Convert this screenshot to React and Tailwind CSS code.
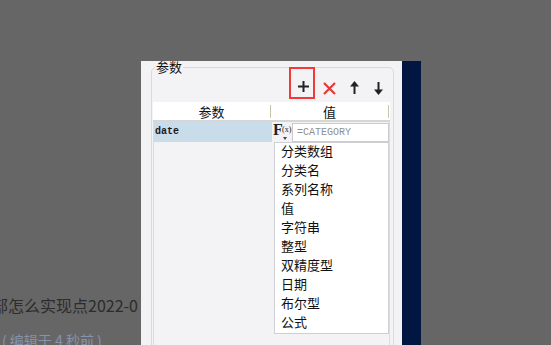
import React from "react";

const cjk = { fontFamily: '"Noto Sans CJK SC", "Noto Sans", sans-serif' };
const mono = { fontFamily: '"Liberation Mono", "DejaVu Sans Mono", monospace' };

const types = ["分类数组", "分类名", "系列名称", "值", "字符串", "整型", "双精度型", "日期", "布尔型", "公式"];

const PlusIcon = () => (
  <svg width="11" height="11" viewBox="0 0 11 11" className="block">
    <path d="M5.5 0v11M0 5.5h11" stroke="#222" strokeWidth="2" />
  </svg>
);

const CrossIcon = () => (
  <svg width="13" height="13" viewBox="0 0 13 13" className="block">
    <path d="M1 1l11 11M12 1L1 12" stroke="#e53935" strokeWidth="2.2" />
  </svg>
);

const ArrowIcon = ({ down }) => (
  <svg width="9" height="13" viewBox="0 0 9 13" className="block" style={down ? { transform: "rotate(180deg)" } : undefined}>
    <path d="M4.5 0L9 5.5H0z" fill="#222" />
    <rect x="3.5" y="4" width="2" height="9" fill="#222" />
  </svg>
);

const App = () => {
  return (
    <div className="relative w-[551px] h-[345px] overflow-hidden bg-[#666666]" style={cjk}>
      {/* page behind the dimmed overlay */}
      <div className="pt-[294px]">
        <div className="ml-[-8px] text-[16px] leading-[22px] text-[#2c2c2c] whitespace-nowrap">部怎么实现点2022-0</div>
        <div className="mt-[14px] ml-[2px] text-[14px] leading-[20px] text-[#8793a8] whitespace-nowrap">( 编辑于 4 秒前 )</div>
      </div>

      {/* dialog */}
      <div className="absolute left-[141px] top-[61px] flex h-[300px]">
        <div className="w-[261px] h-full bg-[#f3f3f6] pl-[10px]">
          <fieldset className="w-[243px] h-[300px] border border-[#dadadd] rounded-[5px]">
            <legend className="ml-[3px] px-[1px] text-[13px] leading-[12px] text-[#111]">参数</legend>

            <div className="flex items-start mt-[-6px]">
              <div className="ml-[137px] w-[26px] h-[32px] border-2 border-[#f03a3a] pl-[7px] pt-[12px]">
                <PlusIcon />
              </div>
              <div className="ml-[8px] mt-[15px]"><CrossIcon /></div>
              <div className="ml-[14px] mt-[14px]"><ArrowIcon /></div>
              <div className="ml-[15px] mt-[15px]"><ArrowIcon down /></div>
            </div>

            <div className="ml-px mt-[3px] w-[237px]">
              <div className="flex items-center h-[18px] bg-white border-b-2 border-[#d6d6d6] box-content text-[13px] text-[#111]">
                <div className="w-[117px] text-center leading-[18px] pt-[2px]">参数</div>
                <div className="w-px h-[13px] bg-[#c9c2ad]"></div>
                <div className="w-[117px] text-center leading-[18px] pt-[2px]">值</div>
                <div className="w-px h-[13px] bg-[#c9c2ad]"></div>
              </div>

              <div className="relative h-[240px] border-l border-r border-[#dcdcdf]">
                <div className="flex h-[20px]">
                  <div className="w-[118px] bg-[#c9dcea] pl-[1px] text-[10px] leading-[20px] font-semibold text-[#1a1a1a]" style={mono}>date</div>
                  <div className="relative w-[19px] h-[20px]">
                    <span className="absolute left-[1px] top-[-1px] text-[16px] leading-[18px] font-bold text-[#222]" style={{ fontFamily: '"Liberation Serif", serif' }}>F</span>
                    <span className="absolute left-[10px] top-[3px] text-[8px] leading-[10px] text-[#222]" style={{ fontFamily: '"Liberation Serif", serif' }}>(x)</span>
                    <span className="absolute left-[11px] top-[15px] w-0 h-0 border-l-[2.5px] border-r-[2.5px] border-t-[3px] border-l-transparent border-r-transparent border-t-[#444]"></span>
                  </div>
                  <div className="ml-px mt-px w-[97px] h-[19px] bg-white border border-[#cbcbcb] pl-[4px] text-[10px] leading-[17px] text-[#8f8f8f]" style={mono}>=CATEGORY</div>
                </div>

                <div className="absolute left-[120px] top-[20px] w-[115px] bg-white border border-[#d0d0d4] pb-[2px]">
                  <div className="-mt-[2px]">
                    {types.map((t) => (
                      <div key={t} className="pl-[6px] text-[13px] leading-[19px] text-[#111]">{t}</div>
                    ))}
                  </div>
                </div>
              </div>
            </div>
          </fieldset>
        </div>
        <div className="w-[19px] h-full bg-[#011640]"></div>
      </div>
    </div>
  );
};

export default App;
